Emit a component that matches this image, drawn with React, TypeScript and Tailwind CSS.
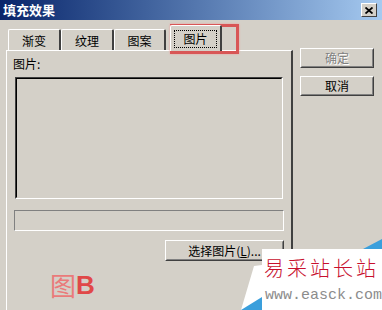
import React from "react";

const font = "font-['Noto_Sans_CJK_SC','Liberation_Sans',sans-serif]";

function RaisedButton({
  children,
  disabled,
  className = "",
}: {
  children: React.ReactNode;
  disabled?: boolean;
  className?: string;
}) {
  return (
    <div
      className={`border border-t-white border-l-white border-r-[#404040] border-b-[#404040] ${className}`}
    >
      <div className="w-full h-full border border-t-[#d4d0c8] border-l-[#d4d0c8] border-r-[#808080] border-b-[#808080] flex items-center justify-center">
        <span
          className={`text-[12px] leading-[14px] ${
            disabled
              ? "text-[#808080] [text-shadow:1px_1px_0_#ffffff]"
              : "text-black"
          }`}
        >
          {children}
        </span>
      </div>
    </div>
  );
}

function Tab({
  label,
  selected,
  className = "",
}: {
  label: string;
  selected?: boolean;
  className?: string;
}) {
  return (
    <div
      className={`relative flex items-center justify-center border-t border-l border-t-white border-l-white border-r-2 border-r-[#404040] rounded-tl-[2px] rounded-tr-[2px] bg-[#d4d0c8] ${
        selected ? "h-[26px] z-10 -mb-[1px]" : "h-[21px]"
      } ${className}`}
    >
      {selected ? (
        <span className="text-[12px] leading-[14px] text-black border border-dotted border-black px-[8px] py-[1px] mt-[1px]">
          {label}
        </span>
      ) : (
        <span className="text-[12px] leading-[14px] text-black mt-[1px]">
          {label}
        </span>
      )}
    </div>
  );
}

export default function App() {
  return (
    <div
      className={`relative w-[382px] h-[310px] overflow-hidden bg-[#d4d0c8] ${font}`}
    >
      {/* Title bar */}
      <div className="h-[20px] flex items-center justify-between pl-[3px] pr-[5px] bg-gradient-to-r from-[#0a246a] to-[#a6caf0]">
        <span className="text-white font-bold text-[13px] leading-[16px]">
          填充效果
        </span>
        <div className="w-[16px] h-[14px] bg-[#d4d0c8] border border-t-white border-l-white border-r-[#404040] border-b-[#404040] flex items-center justify-center">
          <svg width="8" height="7" viewBox="0 0 8 7">
            <path
              d="M0.5 0.5 L7.5 6.5 M7.5 0.5 L0.5 6.5"
              stroke="#000"
              strokeWidth="1.8"
            />
          </svg>
        </div>
      </div>

      {/* Body */}
      <div className="flex pl-[6px]">
        {/* Left: tabs and panel */}
        <div className="w-[287px] flex flex-col">
          <div className="h-[30px] flex items-end pl-[2px]">
            <Tab label="渐变" className="w-[53px]" />
            <Tab label="纹理" className="w-[53px]" />
            <Tab label="图案" className="w-[52px]" />
            <Tab label="图片" selected className="w-[52px] ml-[4px]" />
          </div>
          <div className="h-[270px] border-t border-l border-t-white border-l-white border-r-2 border-r-[#404040] bg-[#d4d0c8] flex flex-col">
            <div className="pl-[6px] pt-[6px] text-[12px] leading-[14px] text-black">
              图片:
            </div>
            <div className="ml-[8px] mt-[6px] w-[268px] h-[122px] border border-t-[#404040] border-l-[#404040] border-r-white border-b-white">
              <div className="w-full h-full border border-t-[#000000] border-l-[#000000] border-r-[#d4d0c8] border-b-[#d4d0c8]" />
            </div>
            <div className="ml-[7px] mt-[11px] w-[270px] h-[21px] border border-t-[#808080] border-l-[#808080] border-r-white border-b-white">
              <div className="w-full h-full border border-t-[#d4d0c8] border-l-[#d4d0c8] border-r-[#d4d0c8] border-b-[#d4d0c8]" />
            </div>
            <RaisedButton className="ml-[158px] mt-[9px] w-[119px] h-[21px]">
              选择图片(<u>L</u>)...
            </RaisedButton>
          </div>
        </div>

        {/* Right: buttons */}
        <div className="ml-[7px] mt-[28px] flex flex-col gap-[8px]">
          <RaisedButton disabled className="w-[74px] h-[20px]">
            确定
          </RaisedButton>
          <RaisedButton className="w-[74px] h-[20px]">取消</RaisedButton>
        </div>
      </div>

      {/* Red highlight around selected tab */}
      <div className="absolute left-[170px] top-[24px] w-[69px] h-[30px] border-[3px] border-[#d85656] shadow-[0_0_2px_#f0a0a0]" />

      {/* 图B annotation */}
      <div className="absolute left-[50px] top-[270px] flex items-center">
        <span className="text-[26px] leading-[30px] text-[#ea7a7a]">图</span>
        <span className="text-[26px] leading-[30px] font-bold text-[#e04848] font-['Liberation_Sans',sans-serif]">
          B
        </span>
      </div>

      {/* Watermark */}
      <div className="absolute left-[238px] top-[236px] w-[144px] h-[74px]">
        <svg width="144" height="74" viewBox="0 0 144 74" className="absolute left-0 top-0">
          <polygon
            points="24,13 144,13 144,74 3,74 16,30 24,29"
            fill="#ffffff"
          />
          <polygon points="125,13 144,3 144,13" fill="#3a9fdc" />
          <polygon points="3,74 24,61 24,74" fill="#3a9fdc" />
        </svg>
        <div className="absolute left-[26px] top-[20px] flex gap-[3px] text-[20px] leading-[24px] text-[#c8102e] whitespace-nowrap font-light">
          <span>易</span>
          <span>采</span>
          <span>站</span>
          <span>长</span>
          <span>站</span>
        </div>
        <div className="absolute left-[27px] top-[51px] text-[15px] leading-[18px] text-[#8c8c8c] whitespace-nowrap font-['Liberation_Mono',monospace]">
          www.easck.com
        </div>
      </div>
    </div>
  );
}
